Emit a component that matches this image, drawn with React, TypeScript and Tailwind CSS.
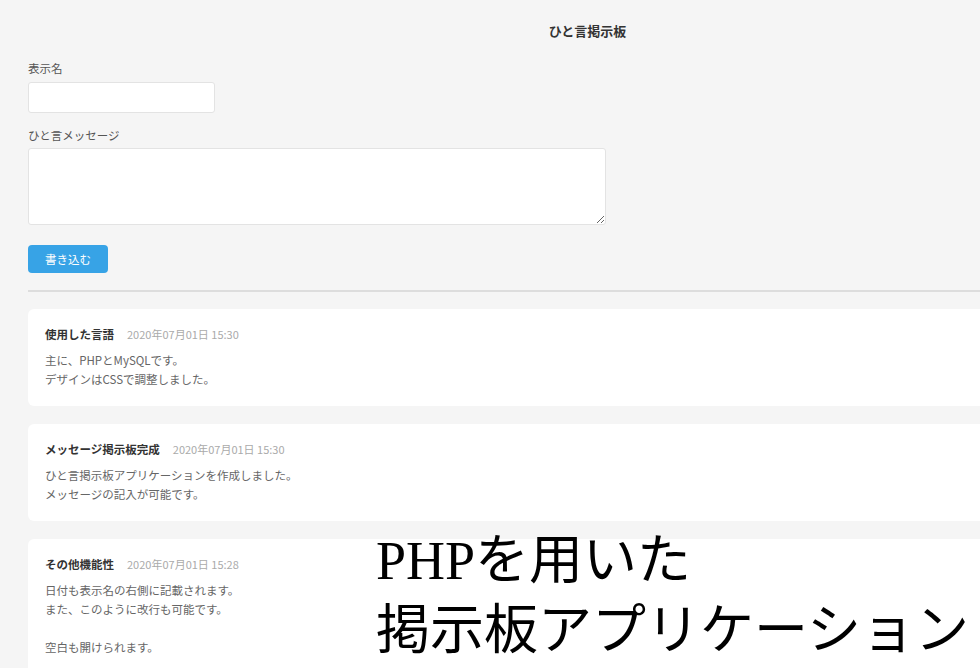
import React from "react";

const posts = [
  {
    name: "使用した言語",
    date: "2020年07月01日 15:30",
    lines: ["主に、PHPとMySQLです。", "デザインはCSSで調整しました。"],
  },
  {
    name: "メッセージ掲示板完成",
    date: "2020年07月01日 15:30",
    lines: ["ひと言掲示板アプリケーションを作成しました。", "メッセージの記入が可能です。"],
  },
  {
    name: "その他機能性",
    date: "2020年07月01日 15:28",
    lines: ["日付も表示名の右側に記載されます。", "また、このように改行も可能です。", "", "空白も開けられます。"],
  },
];

export default function App() {
  return (
    <div
      className="relative w-full h-[668px] overflow-hidden bg-[#f5f5f5]"
      style={{ fontFamily: '"Noto Sans CJK JP", "Liberation Sans", sans-serif' }}
    >
      <div className="w-[1175px] px-[28px] pt-[22px]">
        <h1 className="text-center text-[13px] leading-[18px] font-bold text-[#333]">ひと言掲示板</h1>

        <div className="mt-[19px] text-[11.5px] leading-[18px] text-[#555]">表示名</div>
        <input
          type="text"
          className="mt-[5px] block w-[187px] h-[31px] bg-white border border-[#e3e3e3] rounded-[3px]"
        />

        <div className="mt-[13px] text-[11.5px] leading-[18px] text-[#555]">ひと言メッセージ</div>
        <textarea className="mt-[4px] block w-[578px] h-[77px] bg-white border border-[#e3e3e3] rounded-[3px]" />

        <button className="mt-[20px] block w-[80px] h-[28px] rounded-[4px] bg-[#37a3e6] text-white text-[11.5px] leading-[28px]">
          書き込む
        </button>

        <div className="mt-[17px] h-[2px] bg-[#dddddd]" />

        <div className="mt-[17px] flex flex-col gap-[18px]">
          {posts.map((p) => (
            <div key={p.name} className="bg-white rounded-[6px] pl-[17px] pt-[16px] pb-[17px]">
              <div className="flex items-baseline gap-[13px] leading-[18px]">
                <span className="text-[11.5px] font-bold text-[#333]">{p.name}</span>
                <span className="text-[11px] text-[#aaaaaa]">{p.date}</span>
              </div>
              <div className="mt-[8px] text-[11.5px] leading-[19px] text-[#666]">
                {p.lines.map((l, i) => (
                  <div key={i} className="h-[19px]">{l}</div>
                ))}
              </div>
            </div>
          ))}
        </div>
      </div>

      <div
        className="absolute left-[376px] top-[526px] text-[54px] leading-[70px] text-black whitespace-nowrap"
        style={{ fontFamily: '"Liberation Serif", "Noto Sans CJK JP", serif' }}
      >
        <div>PHPを用いた</div>
        <div>掲示板アプリケーション</div>
      </div>
    </div>
  );
}
